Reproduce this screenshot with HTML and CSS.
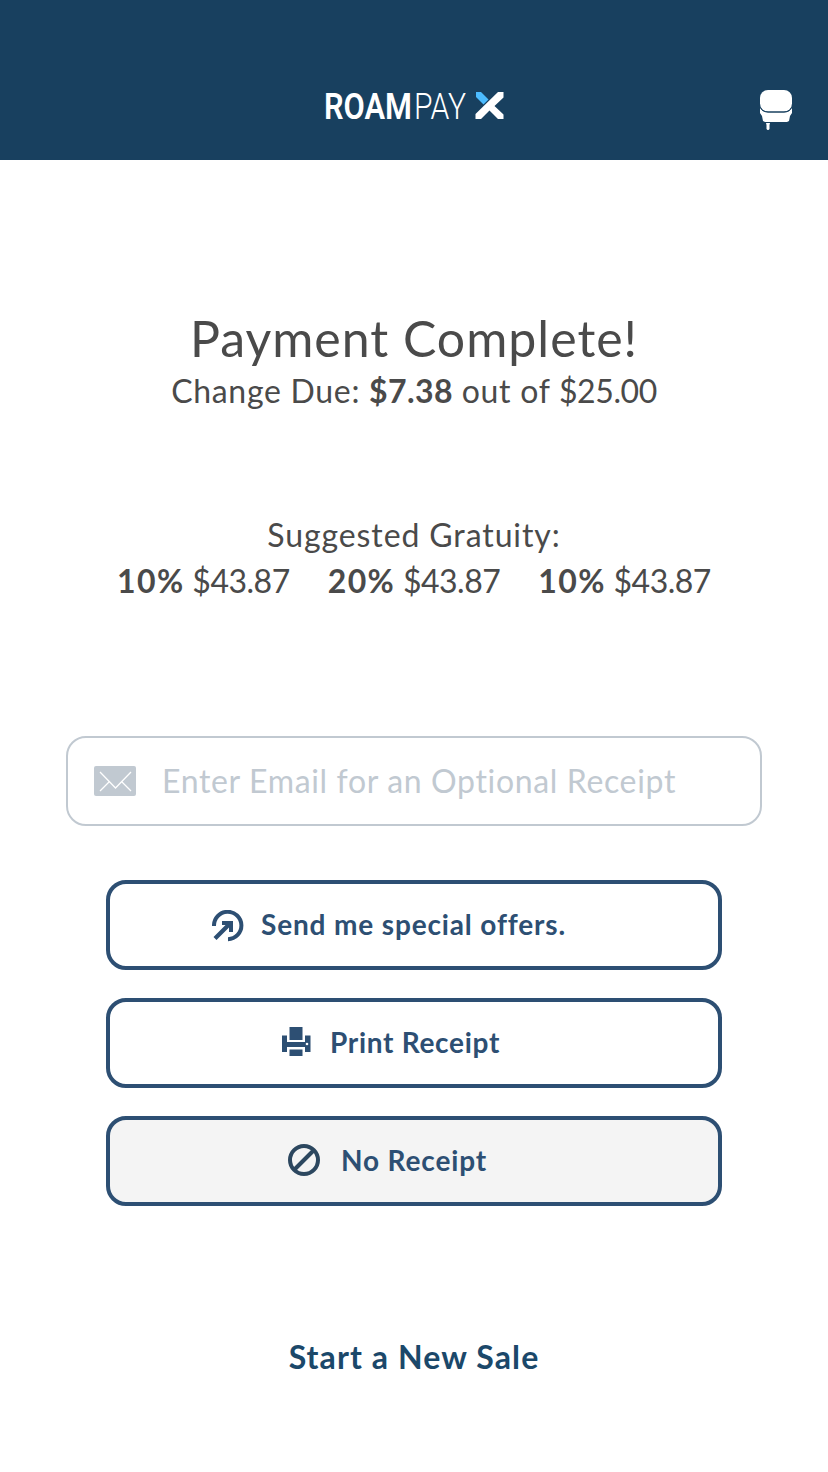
FILE: index.html
```
<!DOCTYPE html>
<html lang="en">
<head>
    <meta charset="UTF-8">
    <title>RoamPay X</title>
    <link rel="stylesheet" href="styles.css">
</head>
<body>
<header class="header">
    <svg class="logo" width="182" height="52" viewBox="0 -8 182 52">
        <text class="logo-roam" x="0" y="31" textLength="88" lengthAdjust="spacingAndGlyphs">ROAM</text>
        <text class="logo-pay" x="90" y="31" textLength="52" lengthAdjust="spacingAndGlyphs">PAY</text>
        <path d="M151.500 26L174 4h5.500v5.500L170.500 18l9 8.500V31H174l-8.500-8.500L157 31h-5.500z" fill="#fff"/>
        <path d="M152 4h5l7.500 7.500-5 5-7.500-7.500z" fill="#4cbcff"/>
    </svg>
    <svg class="reader" width="34" height="42" viewBox="0 0 34 42">
        <rect x="1" y="1" width="32" height="21.500" rx="8" fill="#fff"/>
        <path d="M1 18q2 5 8 5.500h16q6-.5 8-5.500v6l-2 3-1 5-2 1H6l-2-1-1-5-2-3z" fill="#fff"/>
        <path d="M1 18q2 5 8 5h16q6 0 8-5" fill="none" stroke="#18405f"/>
        <path d="M7 34h4l-.5 2v4l-1 1h-1l-1-1v-4z" fill="#fff"/>
    </svg>
</header>
<main class="main">
    <h1 class="title">Payment Complete!</h1>
    <p class="change">Change Due: <b>$7.38</b> out of <span>$25.00</span></p>

    <h2 class="tip-title">Suggested Gratuity:</h2>
    <ul class="tips">
        <li><b>10%</b> $43.87</li>
        <li><b>20%</b> $43.87</li>
        <li><b>10%</b> $43.87</li>
    </ul>

    <div class="email">
        <svg width="42" height="30" viewBox="0 0 42 30">
            <rect width="42" height="30" rx="2" fill="#c1c9d1"/>
            <path d="M6 6l15.500 16L37 6M6 25l9-9M37 25l-9-9" fill="none" stroke="#fff" stroke-width="1.300"/>
        </svg>
        <span>Enter Email for an Optional Receipt</span>
    </div>

    <div class="buttons">
        <a href="#" class="btn offers">
            <svg width="32" height="32" viewBox="0 0 32 32">
                <path d="M2 16A13.700 13.700 0 1 1 16 29.200" fill="none" stroke="#2d4f73" stroke-width="4"/>
                <path d="M10 11h11v11h-4v-4.500L4.500 30 1.500 27 13.500 15H10z" fill="#2d4f73"/>
            </svg>
            <span>Send me special offers.</span>
        </a>
        <a href="#" class="btn print">
            <svg width="30" height="30" viewBox="0 0 30 30">
                <path d="M8.500 0h13v13h-13zM8.500 22.500h13v6.500h-13zM1 8.500h5v6.500h18V8.500h5.500V25H24v-5H6v5H1z" fill="#2d4f73"/>
                <circle cx="26" cy="17" r="1.300" fill="#fff"/>
            </svg>
            <span>Print Receipt</span>
        </a>
        <a href="#" class="btn none">
            <svg width="32" height="32" viewBox="0 0 32 32">
                <circle cx="16" cy="16" r="14" fill="none" stroke="#2c475f" stroke-width="4"/>
                <path d="M6 26L26 6" stroke="#2c475f" stroke-width="4"/>
            </svg>
            <span>No Receipt</span>
        </a>
    </div>

    <a href="#" class="new-sale">Start a New Sale</a>
</main>
</body>
</html>
```
FILE: styles.css
```
body,h1,h2,p,ul{margin:0;padding:0}
body{
    font:32px/46px Lato, sans-serif;
    color:#4a4a4a;
    background:#fff;
}
ul{list-style:none}
a{text-decoration:none}
svg{display:block;flex:none}

.header{
    box-sizing:border-box;
    height:160px;
    padding:80px 35px 0 324px;
    display:flex;
    justify-content:space-between;
    background:#18405f;
}
.logo text{
    font-family:Roboto, sans-serif;
    font-size:37px;
    fill:#fff;
}
.logo .logo-roam{font-weight:600}
.logo .logo-pay{font-weight:300}
.reader{margin-top:9px}

.main{
    display:flex;
    flex-direction:column;
    align-items:center;
    padding-top:147px;
    white-space:nowrap;
}
.title{
    font-size:50px;
    line-height:62px;
    font-weight:400;
    letter-spacing:1px;
}
.change{
    margin-top:1px;
    line-height:42px;
    letter-spacing:.7px;
}
.change b{letter-spacing:.4px}
.change span{letter-spacing:-.4px}
.tip-title{
    margin-top:100px;
    font-size:32px;
    font-weight:400;
    letter-spacing:.9px;
}
.tips{
    display:flex;
    gap:38px;
    letter-spacing:-.5px;
}
.tips b{letter-spacing:1.400px}
.email{
    box-sizing:border-box;
    width:696px;
    height:90px;
    margin-top:132px;
    padding-left:26px;
    display:flex;
    align-items:center;
    gap:26px;
    border:2px solid #c1c9d1;
    border-radius:20px;
    color:#c1c9d1;
    letter-spacing:.65px;
}
.buttons{
    width:616px;
    margin-top:54px;
    display:flex;
    flex-direction:column;
    gap:28px;
}
.btn{
    box-sizing:border-box;
    height:90px;
    padding-bottom:2px;
    display:flex;
    align-items:center;
    border:4px solid #2d4f73;
    border-radius:20px;
    color:#2d4f73;
    font-size:28px;
    font-weight:700;
    letter-spacing:.85px;
}
.offers{
    padding-left:102px;
    gap:17px;
}
.offers svg{margin-top:4px}
.print{
    padding-left:171px;
    gap:19px;
    letter-spacing:.7px;
}
.none{
    padding-left:178px;
    gap:21px;
    background:#f4f4f4;
}
.new-sale{
    margin-top:128px;
    color:#1b486a;
    font-weight:700;
    letter-spacing:1.100px;
}
```
